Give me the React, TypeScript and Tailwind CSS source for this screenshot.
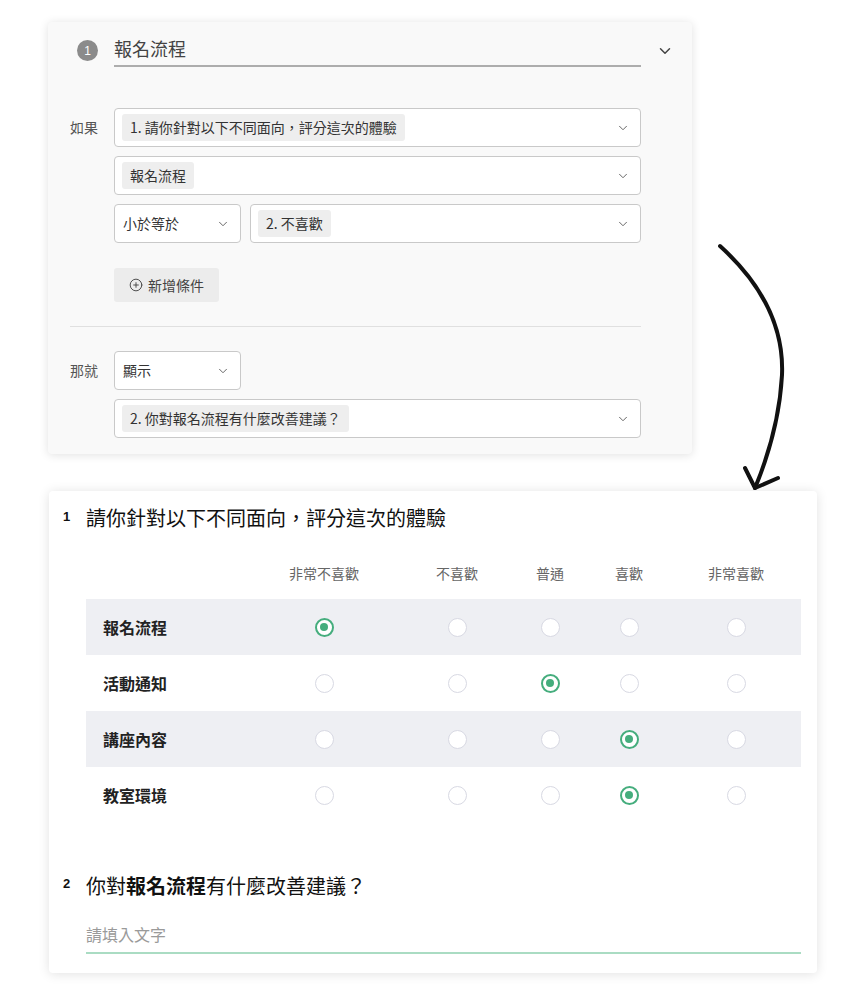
import { ChevronDown, CirclePlus } from "lucide-react";

const columns = ["非常不喜歡", "不喜歡", "普通", "喜歡", "非常喜歡"];
const rows = [
  { label: "報名流程", picked: 0 },
  { label: "活動通知", picked: 2 },
  { label: "講座內容", picked: 3 },
  { label: "教室環境", picked: 3 },
];

function Tag({ children }: { children: React.ReactNode }) {
  return (
    <span className="h-[27px] px-[8px] rounded-[3px] bg-[#eeeeee] text-[14px] text-[#333] flex items-center">
      {children}
    </span>
  );
}

function Select({ children, className = "" }: { children: React.ReactNode; className?: string }) {
  return (
    <div className={`h-[39px] bg-white border border-[#c9c9c9] rounded-[4px] pl-[7px] pr-[10px] flex items-center justify-between ${className}`}>
      <div className="flex items-center">{children}</div>
      <ChevronDown size={14} strokeWidth={1.7} className="text-[#666]" />
    </div>
  );
}

function Radio({ on }: { on: boolean }) {
  if (on) {
    return (
      <span className="w-[19px] h-[19px] rounded-full border-2 border-[#45ad7d] bg-white flex items-center justify-center">
        <span className="w-[8px] h-[8px] rounded-full bg-[#45ad7d]" />
      </span>
    );
  }
  return <span className="w-[19px] h-[19px] rounded-full border-[1.5px] border-[#d8d9e3] bg-white" />;
}

function RuleCard() {
  return (
    <div className="ml-[48px] w-[644px] rounded-[4px] bg-[#f9f9f9] shadow-[0_1px_10px_rgba(0,0,0,0.12)] pt-[12px] pb-[16px]">
      <div className="flex items-center pl-[29px]">
        <span className="w-[21px] h-[21px] rounded-full bg-[#8b8b8b] text-white text-[12px] font-['Liberation_Sans',sans-serif] flex items-center justify-center">1</span>
        <div className="ml-[16px] w-[527px] border-b-2 border-[#adadad] h-[33px] pb-[4px] text-[18px] leading-[28px] text-[#444]">
          報名流程
        </div>
        <ChevronDown size={18} strokeWidth={2} className="ml-[15px] text-[#444]" />
      </div>

      <div className="px-[22px]">
        <div className="mt-[41px] flex">
          <div className="w-[44px] h-[39px] flex items-center text-[14px] text-[#555]">如果</div>
          <div className="w-[527px] flex flex-col gap-[9px]">
            <Select>
              <Tag>1. 請你針對以下不同面向，評分這次的體驗</Tag>
            </Select>
            <Select>
              <Tag>報名流程</Tag>
            </Select>
            <div className="flex gap-[9px]">
              <Select className="w-[127px]">
                <span className="text-[14px] text-[#333] pl-[1px]">小於等於</span>
              </Select>
              <Select className="flex-1">
                <Tag>2. 不喜歡</Tag>
              </Select>
            </div>
            <button className="mt-[16px] w-[105px] h-[34px] rounded-[3px] bg-[#ececec] flex items-center justify-center gap-[5px] text-[14px] text-[#444]">
              <CirclePlus size={14} strokeWidth={1.6} className="text-[#444]" />
              新增條件
            </button>
          </div>
        </div>

        <div className="mt-[24px] w-[571px] border-t border-[#e0e0e0]" />

        <div className="mt-[24px] flex">
          <div className="w-[44px] h-[39px] flex items-center text-[14px] text-[#555]">那就</div>
          <div className="w-[527px] flex flex-col gap-[9px]">
            <Select className="w-[127px]">
              <span className="text-[14px] text-[#333] pl-[1px]">顯示</span>
            </Select>
            <Select>
              <Tag>2. 你對報名流程有什麼改善建議？</Tag>
            </Select>
          </div>
        </div>
      </div>
    </div>
  );
}

function SurveyCard() {
  return (
    <div className="ml-[49px] mt-[37px] w-[768px] rounded-[4px] bg-white shadow-[0_1px_12px_rgba(0,0,0,0.12)] pt-[13px] pb-[19px] pl-[14px] pr-[16px]">
      <div className="flex items-center h-[28px]">
        <span className="w-[23px] text-[13px] font-bold text-[#111] font-['Liberation_Sans',sans-serif] -mt-[3px]">1</span>
        <span className="text-[20px] text-[#111]">請你針對以下不同面向，評分這次的體驗</span>
      </div>

      <div className="ml-[23px] w-[715px]">
        <div className="mt-[27px] h-[28px] grid grid-cols-[161px_154px_112px_74px_84px_130px] items-center text-[14px] text-[#666]">
          <span />
          {columns.map((c) => (
            <span key={c} className="text-center">{c}</span>
          ))}
        </div>
        <div className="mt-[12px]">
          {rows.map((r, i) => (
            <div
              key={r.label}
              className={`h-[56px] grid grid-cols-[161px_154px_112px_74px_84px_130px] items-center ${i % 2 === 0 ? "bg-[#eeeff3]" : ""}`}
            >
              <span className="pl-[17px] text-[16px] font-bold text-[#222]">{r.label}</span>
              {columns.map((c, j) => (
                <span key={c} className="flex justify-center">
                  <Radio on={r.picked === j} />
                </span>
              ))}
            </div>
          ))}
        </div>
      </div>

      <div className="mt-[49px] flex items-center h-[28px]">
        <span className="w-[23px] text-[13px] font-bold text-[#111] font-['Liberation_Sans',sans-serif] -mt-[4px]">2</span>
        <span className="text-[20px] text-[#111]">
          你對<b className="font-bold">報名流程</b>有什麼改善建議？
        </span>
      </div>

      <div className="ml-[23px] mt-[22px] w-[715px] border-b-2 border-[#aadcc3] pb-[6px] text-[16px] leading-[24px] text-[#9a9a9a]">
        請填入文字
      </div>
    </div>
  );
}

export default function App() {
  return (
    <div className="relative min-h-screen bg-white pt-[22px] pb-[30px] font-['Noto_Sans_CJK_TC','Noto_Sans',sans-serif]">
      <RuleCard />
      <SurveyCard />
      <svg className="absolute left-0 top-0 pointer-events-none" width="863" height="1003" viewBox="0 0 863 1003" fill="none">
        <path d="M720 246 Q785 305 782 375 Q779 430 755 488" stroke="#111" strokeWidth="4" strokeLinecap="round" />
        <path d="M745 468 L755 488 L778 478" stroke="#111" strokeWidth="4" strokeLinecap="round" strokeLinejoin="round" />
      </svg>
    </div>
  );
}
